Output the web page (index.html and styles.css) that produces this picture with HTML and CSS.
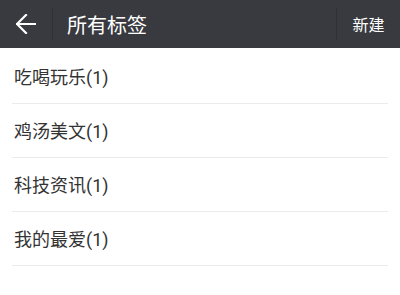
FILE: index.html
```html
<!DOCTYPE html>
<html lang="zh">
<head>
<meta charset="utf-8">
<title>所有标签</title>
<link rel="stylesheet" href="styles.css">
</head>
<body>
<header class="bar">
  <div class="back">
    <svg width="20" height="20" viewBox="0 0 20 20" aria-hidden="true">
      <path d="M1 10 H19 M10 1 L1 10 L10 19" fill="none" stroke="#fff" stroke-width="2.2" stroke-linecap="square"/>
    </svg>
  </div>
  <div class="divider"></div>
  <div class="title">所有标签</div>
  <div class="divider"></div>
  <div class="action">新建</div>
</header>
<ul class="list">
  <li class="row">吃喝玩乐(1)</li>
  <li class="row">鸡汤美文(1)</li>
  <li class="row">科技资讯(1)</li>
  <li class="row">我的最爱(1)</li>
</ul>
</body>
</html>
```
FILE: styles.css
```css
html, body {
  margin: 0;
  padding: 0;
  background: #fff;
  font-family: "Roboto", "Noto Sans CJK SC", sans-serif;
}
.bar {
  height: 48px;
  background: #393a3f;
  display: flex;
  align-items: center;
  color: #fff;
}
.back {
  width: 52px;
  height: 48px;
  display: flex;
  align-items: center;
  justify-content: center;
}
.divider {
  width: 1px;
  height: 32px;
  background: #303135;
}
.title {
  flex: 1;
  margin-left: 14px;
  font-size: 20px;
}
.action {
  width: 63px;
  text-align: center;
  font-size: 16px;
}
.list {
  list-style: none;
  margin: 2px 0 0;
  padding: 0;
}
.row {
  margin: 0 12px;
  height: 51px;
  padding: 0 0 2px 2px;
  border-bottom: 1px solid #ebebeb;
  display: flex;
  align-items: center;
  font-size: 18px;
  color: #333;
}
```
